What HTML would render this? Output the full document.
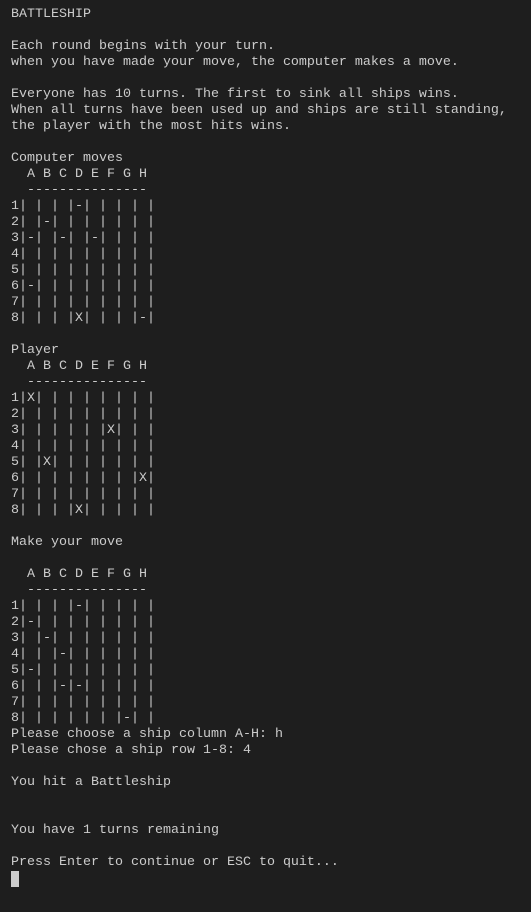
<!DOCTYPE html>
<html><head><meta charset="utf-8"><style>
html,body{margin:0;padding:0;background:#1e1e1e;width:531px;height:912px;overflow:hidden}
pre{margin:0;position:absolute;left:11px;top:7px;font-family:"Liberation Mono",monospace;font-size:13.33px;line-height:16px;color:#cccccc;white-space:pre}
.c{display:inline-block;width:8px;height:16px;background:#cccccc;vertical-align:top}
</style></head><body><pre>BATTLESHIP

Each round begins with your turn.
when you have made your move, the computer makes a move.

Everyone has 10 turns. The first to sink all ships wins.
When all turns have been used up and ships are still standing,
the player with the most hits wins.

Computer moves
  A B C D E F G H
  ---------------
1| | | |-| | | | |
2| |-| | | | | | |
3|-| |-| |-| | | |
4| | | | | | | | |
5| | | | | | | | |
6|-| | | | | | | |
7| | | | | | | | |
8| | | |X| | | |-|

Player
  A B C D E F G H
  ---------------
1|X| | | | | | | |
2| | | | | | | | |
3| | | | | |X| | |
4| | | | | | | | |
5| |X| | | | | | |
6| | | | | | | |X|
7| | | | | | | | |
8| | | |X| | | | |

Make your move

  A B C D E F G H
  ---------------
1| | | |-| | | | |
2|-| | | | | | | |
3| |-| | | | | | |
4| | |-| | | | | |
5|-| | | | | | | |
6| | |-|-| | | | |
7| | | | | | | | |
8| | | | | | |-| |
Please choose a ship column A-H: h
Please chose a ship row 1-8: 4

You hit a Battleship


You have 1 turns remaining

Press Enter to continue or ESC to quit...
<span class="c"></span></pre></body></html>
